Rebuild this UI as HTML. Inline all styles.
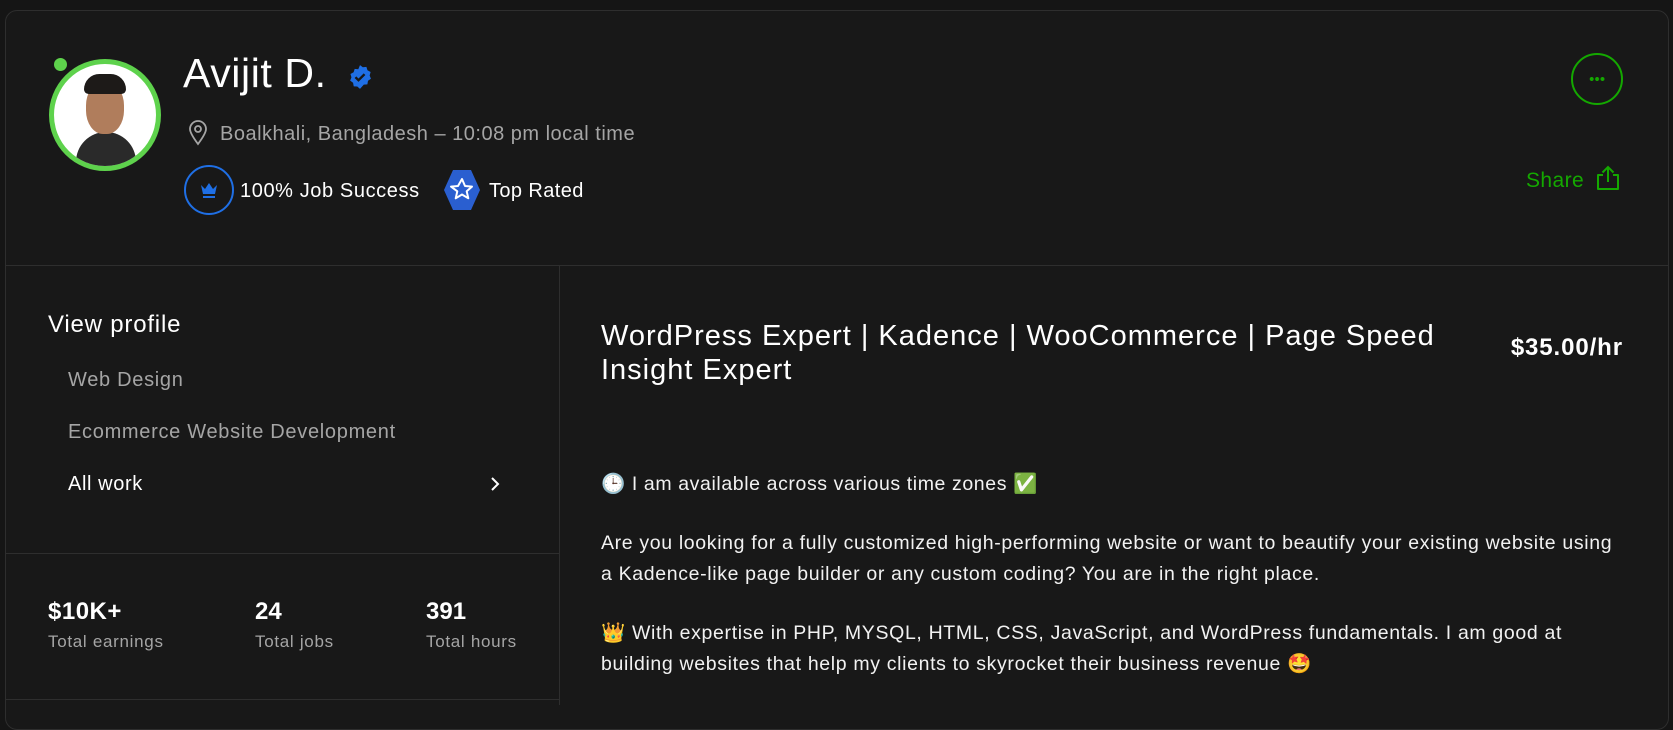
<!DOCTYPE html>
<html><head><meta charset="utf-8"><style>
*{margin:0;padding:0;box-sizing:border-box}
body{width:1673px;height:703px;background:#151515;font-family:"Liberation Sans",sans-serif;color:#fff;overflow:hidden;position:relative}
.card{position:absolute;left:5px;top:10px;width:1664px;height:720px;background:#181818;border:1px solid #2e2e2e;border-radius:12px}
.a{position:absolute;white-space:nowrap}
.hl{position:absolute;height:1px;background:#2e2e2e}
.vl{position:absolute;width:1px;background:#2e2e2e}
.gray{color:#a5a5a5}
</style></head><body>
<div class="card"></div>
<!-- avatar -->
<div class="a" style="left:49px;top:59px;width:112px;height:112px;border-radius:50%;border:5px solid #5ed24c;background:#fff;overflow:hidden">
 <div style="position:absolute;left:22px;top:68px;width:60px;height:50px;border-radius:30px 30px 0 0;background:#2a2a2a"></div>
 <div style="position:absolute;left:32px;top:18px;width:38px;height:52px;border-radius:45%;background:#b07d5c"></div>
 <div style="position:absolute;left:30px;top:10px;width:42px;height:20px;border-radius:20px 20px 6px 6px;background:#1d1a18"></div>
</div>
<div class="a" style="left:52px;top:56px;width:17px;height:17px;border-radius:50%;background:#5ed24c;border:2px solid #181818"></div>
<div class="a" style="left:183px;top:50px;font-size:41px;font-weight:500;letter-spacing:0.6px">Avijit D.</div>
<svg class="a" style="left:347px;top:64px" width="26" height="26" viewBox="0 0 24 24"><path d="M12 1l2.6 2 3.3-.3 1 3.1 2.9 1.6-.9 3.2 1.2 3-2.7 1.9-.6 3.3-3.3.2L12 23l-2.5-2.2-3.3-.2-.6-3.3-2.7-1.9 1.2-3-.9-3.2 2.9-1.6 1-3.1 3.3.3z" fill="#1f6fe5"/><path d="M7.8 12.2l2.8 2.8 5.6-5.6" stroke="#181818" stroke-width="2.2" fill="none"/></svg>
<svg class="a" style="left:188px;top:120px" width="20" height="26" viewBox="0 0 20 26"><path d="M10 24C4 16 2 12 2 9a8 8 0 0116 0c0 3-2 7-8 15z" fill="none" stroke="#a5a5a5" stroke-width="1.8"/><circle cx="10" cy="9" r="3" fill="none" stroke="#a5a5a5" stroke-width="1.8"/></svg>
<div class="a gray" style="left:220px;top:123px;font-size:20px;letter-spacing:0.5px">Boalkhali, Bangladesh – 10:08 pm local time</div>
<div class="a" style="left:184px;top:165px;width:50px;height:50px;border-radius:50%;border:2px solid #1f6fe5"></div>
<svg class="a" style="left:199px;top:180px" width="20" height="20" viewBox="0 0 20 20"><path d="M2 5l4 4 4-6 4 6 4-4-2 9H4z" fill="#1f6fe5"/><rect x="4" y="16" width="12" height="2" fill="#1f6fe5"/></svg>
<div class="a" style="left:240px;top:180px;font-size:20px;font-weight:500;letter-spacing:0.6px">100% Job Success</div>
<svg class="a" style="left:443px;top:168px" width="38" height="44" viewBox="0 0 38 44"><path d="M10 2h18l9 20-9 20H10L1 22z" fill="#2a5fd0"/><path d="M19 11l3 7 7 .6-5.3 4.7 1.6 7-6.3-3.8-6.3 3.8 1.6-7L8 18.6l7-.6z" fill="none" stroke="#fff" stroke-width="2" stroke-linejoin="round"/></svg>
<div class="a" style="left:489px;top:180px;font-size:20px;font-weight:500;letter-spacing:0.4px">Top Rated</div>
<!-- right top -->
<div class="a" style="left:1571px;top:53px;width:52px;height:52px;border-radius:50%;border:2px solid #14a800"></div>
<div class="a" style="left:1589px;top:77px;width:16px;height:4px;background:radial-gradient(circle,#14a800 1.8px,transparent 2.2px) 0 0/5.4px 4px repeat-x"></div>
<div class="a" style="left:1526px;top:169px;font-size:21px;color:#14a800;letter-spacing:0.4px">Share</div>
<svg class="a" style="left:1594px;top:164px" width="28" height="28" viewBox="0 0 28 28"><path d="M9 11H4v14h20V11h-5" fill="none" stroke="#14a800" stroke-width="2" stroke-linejoin="round"/><path d="M14 18V3M8.5 8.5L14 3l5.5 5.5" fill="none" stroke="#14a800" stroke-width="2"/></svg>
<div class="hl" style="left:6px;top:265px;width:1662px"></div>
<div class="vl" style="left:559px;top:265px;height:440px"></div>
<!-- left column -->
<div class="a" style="left:48px;top:311px;font-size:24px;font-weight:500;letter-spacing:0.8px">View profile</div>
<div class="a gray" style="left:68px;top:369px;font-size:20px;letter-spacing:0.7px">Web Design</div>
<div class="a gray" style="left:68px;top:421px;font-size:20px;letter-spacing:0.7px">Ecommerce Website Development</div>
<div class="a" style="left:68px;top:473px;font-size:20px;font-weight:500;letter-spacing:0.6px">All work</div>
<svg class="a" style="left:489px;top:476px" width="12" height="16" viewBox="0 0 12 16"><path d="M3 2l6 6-6 6" fill="none" stroke="#fff" stroke-width="2"/></svg>
<div class="hl" style="left:6px;top:553px;width:553px"></div>
<div class="a" style="left:48px;top:598px;font-size:24px;font-weight:700;letter-spacing:0.5px">$10K+</div>
<div class="a" style="left:255px;top:598px;font-size:24px;font-weight:700">24</div>
<div class="a" style="left:426px;top:598px;font-size:24px;font-weight:700">391</div>
<div class="a gray" style="left:48px;top:632px;font-size:17px;letter-spacing:0.7px">Total earnings</div>
<div class="a gray" style="left:255px;top:632px;font-size:17px;letter-spacing:0.7px">Total jobs</div>
<div class="a gray" style="left:426px;top:632px;font-size:17px;letter-spacing:0.7px">Total hours</div>
<div class="hl" style="left:6px;top:699px;width:553px"></div>
<!-- right -->
<div class="a" style="left:601px;top:319px;font-size:29px;font-weight:500;line-height:34px;letter-spacing:1px">WordPress Expert | Kadence | WooCommerce | Page Speed<br>Insight Expert</div>
<div class="a" style="right:50px;top:334px;font-size:24px;font-weight:700;letter-spacing:0.9px">$35.00/hr</div>
<div class="a" style="left:601px;top:469px;font-size:19.5px;line-height:31px;color:#f2f2f2;letter-spacing:0.6px">🕒 I am available across various time zones <span style="color:#3fbf5f">✅</span></div>
<div class="a" style="left:601px;top:528px;font-size:19.5px;line-height:31px;color:#f2f2f2;letter-spacing:0.65px">Are you looking for a fully customized high-performing website or want to beautify your existing website using<br>a Kadence-like page builder or any custom coding? You are in the right place.</div>
<div class="a" style="left:601px;top:618px;font-size:19.5px;line-height:31px;color:#f2f2f2;letter-spacing:0.65px">👑 With expertise in PHP, MYSQL, HTML, CSS, JavaScript, and WordPress fundamentals. I am good at<br>building websites that help my clients to skyrocket their business revenue 🤩</div>
</body></html>
